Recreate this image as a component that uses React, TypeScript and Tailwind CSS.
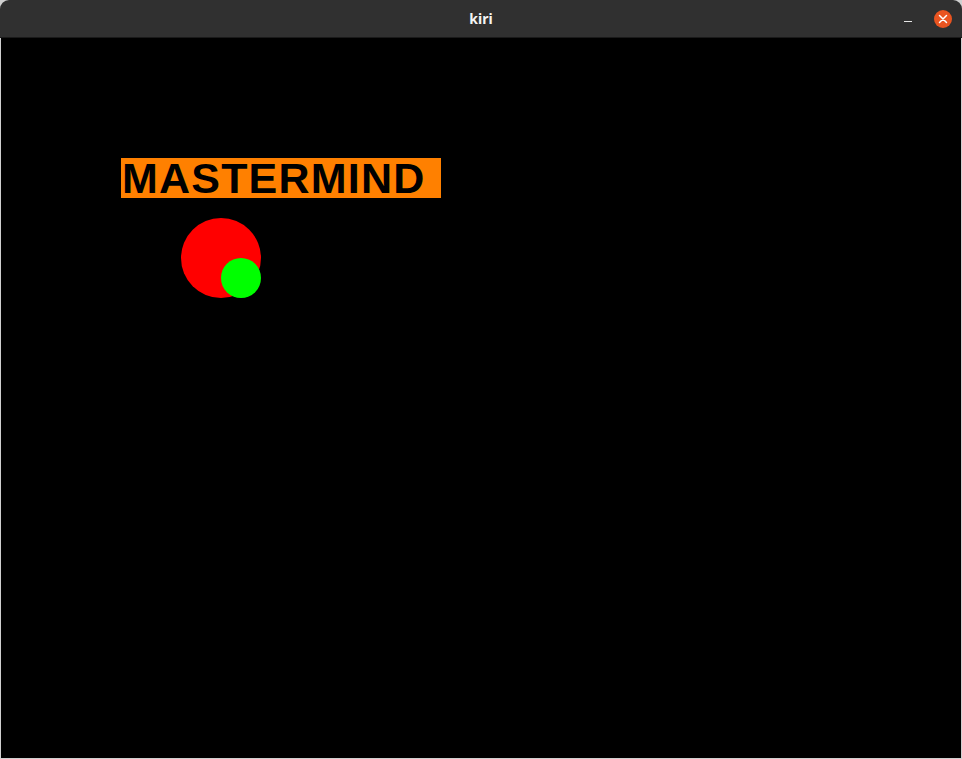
export default function App() {
  return (
    <div className="flex h-[759px] w-[962px] flex-col overflow-hidden bg-[#d0d0d0] font-['Liberation_Sans',Arial,sans-serif]">
      <div className="relative flex h-[38px] shrink-0 items-center justify-center rounded-t-[9px] bg-[#303030] border-b border-[#1a1a1a]">
        <span className="text-[14px] font-bold text-[#f4f4f4] font-['Noto_Sans','Liberation_Sans',sans-serif]">kiri</span>
        <div className="absolute right-[10px] top-[10px] flex items-center gap-[22px]">
          <span className="mt-[4px] block h-[1px] w-[8px] bg-[#e6e6e6]" />
          <span className="flex h-[18px] w-[18px] items-center justify-center rounded-full bg-[#e95420]">
            <svg width="10" height="10" viewBox="0 0 10 10">
              <path d="M1.5 1.5 L8.5 8.5 M8.5 1.5 L1.5 8.5" stroke="#fff" strokeWidth="1.5" strokeLinecap="round" />
            </svg>
          </span>
        </div>
      </div>
      <div className="mx-[1px] mb-[1px] flex-1 bg-black">
        <div className="ml-[120px] mt-[120px] flex h-[40px] w-[320px] items-center bg-[#ff8000]">
          <span className="pl-[1px] text-[43px] font-bold leading-none tracking-[1.2px] text-black">MASTERMIND</span>
        </div>
        <div className="relative ml-[180px] mt-[20px] h-[80px] w-[80px] rounded-full bg-[#ff0000]">
          <div className="absolute left-[40px] top-[40px] h-[40px] w-[40px] rounded-full bg-[#00ff00]" />
        </div>
      </div>
    </div>
  );
}
